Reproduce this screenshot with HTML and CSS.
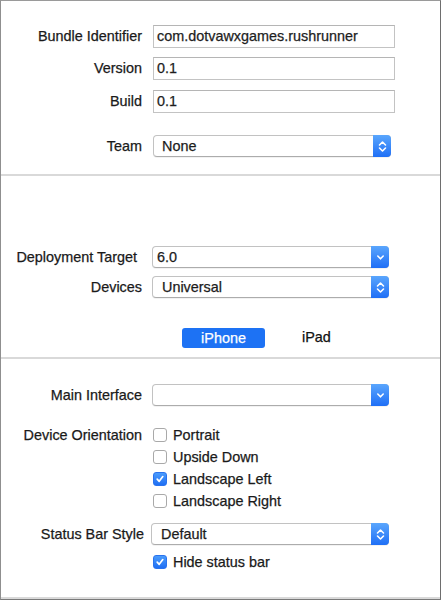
FILE: index.html
```html
<!DOCTYPE html>
<html>
<head>
<meta charset="utf-8">
<link rel="stylesheet" href="styles.css">
</head>
<body>
<div class="panel">
  <section class="sec sec1">
    <div class="row">
      <label class="lbl">Bundle Identifier</label>
      <div class="field">com.dotvawxgames.rushrunner</div>
    </div>
    <div class="row gap10">
      <label class="lbl">Version</label>
      <div class="field">0.1</div>
    </div>
    <div class="row gap11">
      <label class="lbl">Build</label>
      <div class="field">0.1</div>
    </div>
    <div class="row gap23">
      <label class="lbl">Team</label>
      <div class="popup popup-team"><span class="pv pv-none">None</span><span class="arrow"><svg width="9" height="13" viewBox="0 0 9 13"><path d="M1.5 5 L4.5 2 L7.5 5 M1.5 8 L4.5 11 L7.5 8" fill="none" stroke="#fff" stroke-width="1.6" stroke-linecap="round" stroke-linejoin="round"/></svg></span></div>
    </div>
  </section>
  <div class="sep"></div>
  <section class="sec sec2">
    <div class="row">
      <label class="lbl lbl-dt">Deployment Target</label>
      <div class="popup"><span class="pv pv-tight">6.0</span><span class="arrow"><svg width="9" height="13" viewBox="0 0 9 13"><path d="M1.8 5 L4.5 7.8 L7.2 5" fill="none" stroke="#fff" stroke-width="1.6" stroke-linecap="round" stroke-linejoin="round"/></svg></span></div>
    </div>
    <div class="row gap8">
      <label class="lbl">Devices</label>
      <div class="popup"><span class="pv">Universal</span><span class="arrow"><svg width="9" height="13" viewBox="0 0 9 13"><path d="M1.5 5 L4.5 2 L7.5 5 M1.5 8 L4.5 11 L7.5 8" fill="none" stroke="#fff" stroke-width="1.6" stroke-linecap="round" stroke-linejoin="round"/></svg></span></div>
    </div>
    <div class="tabs">
      <span class="tab active">iPhone</span>
      <span class="tab">iPad</span>
    </div>
  </section>
  <div class="sep"></div>
  <section class="sec sec3">
    <div class="row">
      <label class="lbl">Main Interface</label>
      <div class="popup"><span class="pv"></span><span class="arrow"><svg width="9" height="13" viewBox="0 0 9 13"><path d="M1.8 5 L4.5 7.8 L7.2 5" fill="none" stroke="#fff" stroke-width="1.6" stroke-linecap="round" stroke-linejoin="round"/></svg></span></div>
    </div>
    <div class="row row-top gap18">
      <label class="lbl">Device Orientation</label>
      <div class="checks">
        <div class="check"><span class="box"></span>Portrait</div>
        <div class="check"><span class="box"></span>Upside Down</div>
        <div class="check"><span class="box on"><svg width="10" height="10" viewBox="0 0 10 10"><path d="M2.2 5.2 L4.2 7.3 L7.8 2.6" fill="none" stroke="#fff" stroke-width="1.7" stroke-linecap="round" stroke-linejoin="round"/></svg></span>Landscape Left</div>
        <div class="check"><span class="box"></span>Landscape Right</div>
      </div>
    </div>
    <div class="row gap11">
      <label class="lbl lbl-sb">Status Bar Style</label>
      <div class="popup popup-sb"><span class="pv">Default</span><span class="arrow"><svg width="9" height="13" viewBox="0 0 9 13"><path d="M1.5 5 L4.5 2 L7.5 5 M1.5 8 L4.5 11 L7.5 8" fill="none" stroke="#fff" stroke-width="1.6" stroke-linecap="round" stroke-linejoin="round"/></svg></span></div>
    </div>
    <div class="row gap6">
      <span class="lbl"></span>
      <div class="check check-hide"><span class="box on"><svg width="10" height="10" viewBox="0 0 10 10"><path d="M2.2 5.2 L4.2 7.3 L7.8 2.6" fill="none" stroke="#fff" stroke-width="1.7" stroke-linecap="round" stroke-linejoin="round"/></svg></span>Hide status bar</div>
    </div>
  </section>
  <div class="sep"></div>
</div>
</body>
</html>
```

FILE: styles.css
```css
* { box-sizing: border-box; }
html, body { margin: 0; padding: 0; background: #fff; }
body {
  font-family: "Liberation Sans", Arial, Helvetica, sans-serif;
  font-size: 14.4px;
  color: #1b1b1b;
  -webkit-text-stroke: 0.25px currentColor;
}
.panel {
  width: 441px;
  height: 600px;
  border-left: 1px solid #8f8f8f;
  border-top: 1px solid #9a9a9a;
  border-right: 1px solid #6e6e6e;
  border-bottom: 1px solid #7a7a7a;
  background: #fff;
  display: flex;
  flex-direction: column;
}
.sep { height: 2px; background: #d9d9d9; flex: none; }
.sec { display: flex; flex-direction: column; flex: none; }
.sec1 { padding: 24px 0 17px; }
.sec2 { padding: 70px 0 9px; }
.sec3 { padding: 25px 0 0; flex: 1; }

.row { display: flex; align-items: center; height: 22px; }
.row-top { align-items: flex-start; height: auto; }
.gap6 { margin-top: 6px; }
.gap8 { margin-top: 8px; }
.gap10 { margin-top: 10px; }
.gap11 { margin-top: 11px; }
.gap18 { margin-top: 18px; }
.gap23 { margin-top: 23px; }

.lbl {
  width: 141px;
  flex: none;
  text-align: right;
  margin-right: 11px;
  line-height: 22px;
  white-space: nowrap;
  color: #1a1a1a;
}
.lbl-dt { padding-right: 5px; }
.lbl-sb { margin-right: 9px; width: 143px; }

.field {
  width: 242px;
  height: 23px;
  border: 1px solid #c3c3c3;
  border-top-color: #b5b5b5;
  padding-left: 3px;
  line-height: 21px;
  color: #1e1e1e;
  background: #fff;
}

.popup {
  width: 237px;
  height: 22px;
  margin-left: -1px;
  border: 1px solid #c2c2c2;
  border-bottom-color: #acacac;
  border-radius: 4px;
  display: flex;
  align-items: stretch;
  background: #fff;
  box-shadow: 0 1px 0 rgba(0,0,0,0.05);
}
.popup-team { width: 238px; margin-left: 0; }
.popup-sb { width: 238px; margin-left: -2px; }
.pv {
  flex: 1;
  padding-left: 9px;
  line-height: 20px;
  color: #1c1c1c;
}
.pv-none { padding-left: 8px; }
.pv-tight { padding-left: 4px; }
.arrow {
  width: 18px;
  margin: -1px -1px -1px 0;
  border-radius: 0 4px 4px 0;
  background: linear-gradient(#5aa6fd, #1f6ff6);
  display: flex;
  align-items: center;
  justify-content: center;
}

.tabs {
  display: flex;
  align-items: center;
  margin-top: 30px;
  padding-left: 181px;
  height: 20px;
}
.tab {
  height: 20px;
  line-height: 21px;
  text-align: center;
  color: #111;
}
.tab.active {
  width: 83px;
  background: #1d72f4;
  border-radius: 3px;
  color: #fff;
  margin-right: 37px;
}
.tab:not(.active) { line-height: 18px; align-self: flex-start; }

.checks { display: flex; flex-direction: column; }
.check {
  display: flex;
  align-items: center;
  height: 22px;
  color: #1a1a1a;
  white-space: nowrap;
}
.box {
  width: 14px;
  height: 14px;
  border: 1px solid #a9a9a9;
  border-radius: 3px;
  background: #fff;
  margin-right: 6px;
  flex: none;
  display: flex;
  align-items: center;
  justify-content: center;
}
.box.on {
  border-color: #2a73ee;
  background: linear-gradient(#4b9cfc, #1f6ff4);
}
.check-hide { margin-left: 0; }
```
